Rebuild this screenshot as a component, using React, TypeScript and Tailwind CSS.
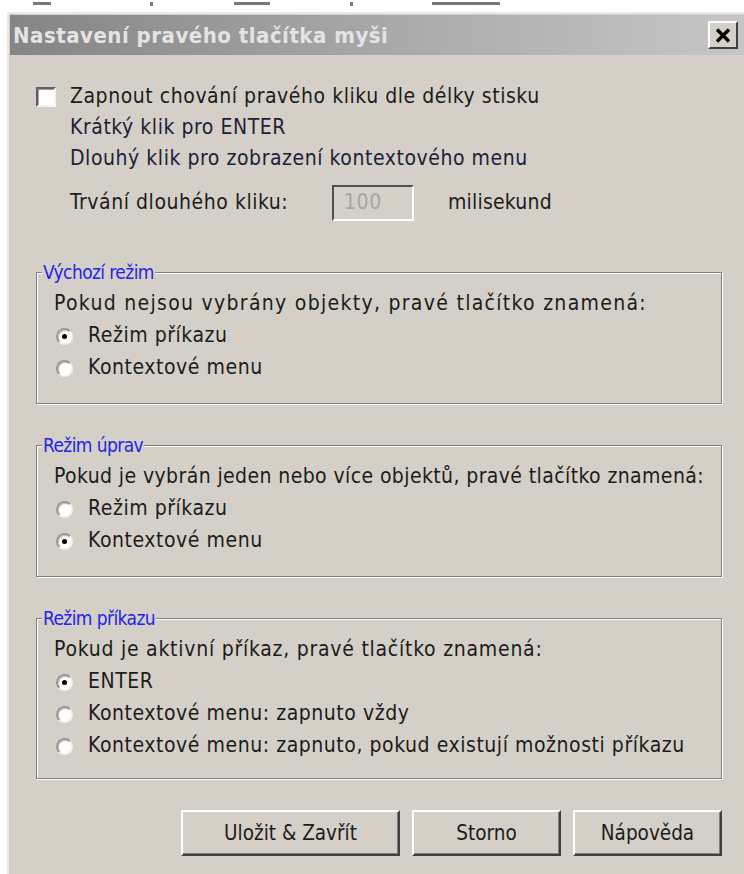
import { ReactNode } from 'react';

// Classic etched group box with a blue caption sitting on the top border
function GroupBox({ title, pb, children }: { title: string; pb: string; children: ReactNode }) {
  return (
    <fieldset className={`border border-[#808080] shadow-[1px_1px_0_#ffffff,inset_1px_1px_0_#ffffff] pl-[17px] pr-[8px] pt-[5px] ${pb} m-0 min-w-0`}>
      <legend className="ml-[-12px] px-[1px] bg-[#d4d0c8] text-[#2424e6] text-[19px] leading-[22px] tracking-[-0.6px]">{title}</legend>
      {children}
    </fieldset>
  );
}

function Radio({ label, checked }: { label: string; checked?: boolean }) {
  return (
    <div className="h-[32px] flex items-center">
      <span className="ml-[2px] w-[17px] h-[17px] rounded-full bg-white border-2 border-t-[#9a9890] border-l-[#9a9890] border-b-[#f4f3ef] border-r-[#f4f3ef] flex items-center justify-center shadow-[inset_1px_1px_0_#c8c6c0]">
        {checked && <span className="w-[5px] h-[5px] rounded-full bg-black" />}
      </span>
      <span className="ml-[15px]">{label}</span>
    </div>
  );
}

function Button({ label, width }: { label: string; width: string }) {
  return (
    <button
      className={`${width} h-[46px] bg-[#d4d0c8] border-t-2 border-l-2 border-t-white border-l-white border-b-2 border-r-2 border-b-[#404040] border-r-[#404040] shadow-[inset_-1px_-1px_0_#808080] text-[#1c1c1c] text-[20.5px] tracking-normal`}
    >
      {label}
    </button>
  );
}

export default function App() {
  return (
    <div className="relative w-[744px] h-[874px] overflow-hidden bg-white text-[#1c1c1c] font-['DejaVu_Sans_Condensed','DejaVu_Sans',sans-serif]">
      {/* clipped text of the window behind */}
      <div className="relative h-[12px]">
        <span className="absolute left-[33px] top-[2px] w-[18px] h-[3px] bg-[#404040] opacity-70" />
        <span className="absolute left-[150px] top-[2px] w-[3px] h-[4px] bg-[#404040] opacity-70" />
        <span className="absolute left-[234px] top-[2px] w-[36px] h-[3px] bg-[#404040] opacity-70" />
        <span className="absolute left-[350px] top-[2px] w-[3px] h-[4px] bg-[#404040] opacity-70" />
        <span className="absolute left-[432px] top-[2px] w-[68px] h-[3px] bg-[#404040] opacity-70" />
      </div>

      <div className="ml-[7px] h-[862px] bg-[#d4d0c8] border-t-2 border-l-2 border-t-[#ebe9e3] border-l-[#ebe9e3] pt-[1px] pl-[1px]">
        {/* title bar */}
        <div className="h-[40px] flex items-center justify-between pl-[3px] pr-[6px] bg-gradient-to-r from-[#858585] via-[#a8a8a8] to-[#c6c6c6]">
          <span className="text-[#e4e4e4] font-bold text-[22px] tracking-[0.5px]">Nastavení pravého tlačítka myši</span>
          <span className="w-[30px] h-[28px] bg-[#d4d0c8] border-t-2 border-l-2 border-t-white border-l-white border-b-2 border-r-2 border-b-[#404040] border-r-[#404040] flex items-center justify-center">
            <svg width="16" height="15" viewBox="0 0 16 15">
              <path d="M2 1.5 L14 13.5 M14 1.5 L2 13.5" stroke="#000" strokeWidth="3.4" />
            </svg>
          </span>
        </div>

        <div className="pl-[26px] pr-[22px] pt-[26px] text-[21px] tracking-[0.55px]">
          <div className="h-[31px] flex items-center">
            <span className="w-[20px] h-[20px] bg-white border-2 border-t-[#606060] border-l-[#606060] border-b-[#f4f3ef] border-r-[#f4f3ef] shadow-[inset_1px_1px_0_#a0a0a0]" />
            <span className="ml-[14px]">Zapnout chování pravého kliku dle délky stisku</span>
          </div>
          <div className="h-[31px] flex items-center pl-[34px] text-[#20203a]">Krátký klik pro ENTER</div>
          <div className="h-[31px] flex items-center pl-[34px] text-[#20203a]">Dlouhý klik pro zobrazení kontextového menu</div>

          <div className="mt-[11px] h-[36px] flex items-center pl-[34px]">
            <span className="w-[262px]">Trvání dlouhého kliku:</span>
            <span className="w-[82px] h-[36px] border-2 border-t-[#505050] border-l-[#505050] border-b-white border-r-white flex items-center pl-[10px] text-[#a8a6a0]">100</span>
            <span className="ml-[34px] tracking-[0.2px]">milisekund</span>
          </div>

          <div className="mt-[40px] flex flex-col gap-[30px]">
            <GroupBox title="Výchozí režim" pb="pb-[19px]">
              <div className="h-[32px] flex items-center whitespace-nowrap tracking-[1.3px]">Pokud nejsou vybrány objekty, pravé tlačítko znamená:</div>
              <Radio label="Režim příkazu" checked />
              <Radio label="Kontextové menu" />
            </GroupBox>
            <GroupBox title="Režim úprav" pb="pb-[19px]">
              <div className="h-[32px] flex items-center whitespace-nowrap tracking-[0.4px]">Pokud je vybrán jeden nebo více objektů, pravé tlačítko znamená:</div>
              <Radio label="Režim příkazu" />
              <Radio label="Kontextové menu" checked />
            </GroupBox>
            <GroupBox title="Režim příkazu" pb="pb-[16px]">
              <div className="h-[32px] flex items-center whitespace-nowrap tracking-[0.75px]">Pokud je aktivní příkaz, pravé tlačítko znamená:</div>
              <Radio label="ENTER" checked />
              <Radio label="Kontextové menu: zapnuto vždy" />
              <Radio label="Kontextové menu: zapnuto, pokud existují možnosti příkazu" />
            </GroupBox>
          </div>

          <div className="mt-[31px] flex justify-end gap-[12px]">
            <Button label="Uložit & Zavřít" width="w-[219px]" />
            <Button label="Storno" width="w-[149px]" />
            <Button label="Nápověda" width="w-[149px]" />
          </div>
        </div>
      </div>
    </div>
  );
}
